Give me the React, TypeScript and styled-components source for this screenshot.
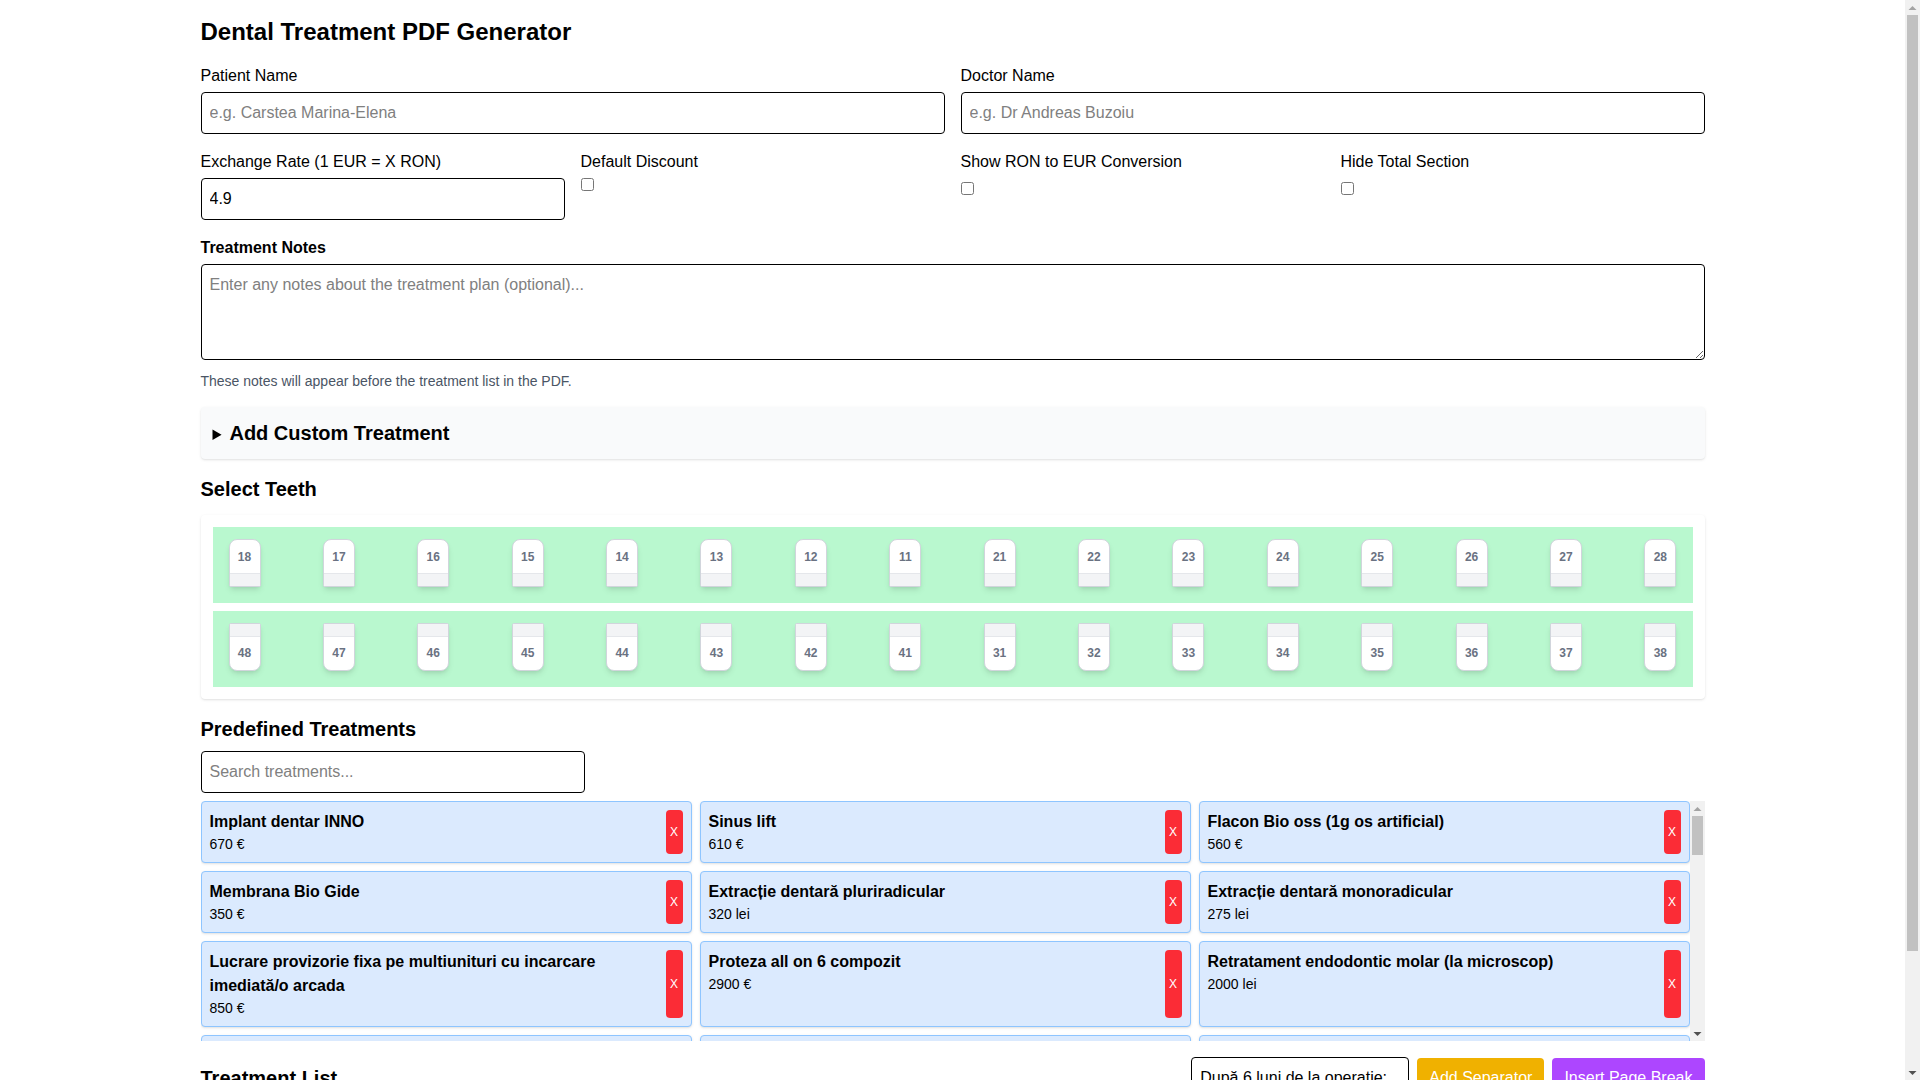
import React from "react";
import styled, { createGlobalStyle } from "styled-components";

const GlobalStyle = createGlobalStyle`
  * { box-sizing: border-box; }
  html, body { margin: 0; padding: 0; background: #fff; }
  body { padding-right: 15px; font-family: "Liberation Sans", Arial, sans-serif; font-size: 16px; line-height: 24px; color: #000; }
  input, textarea, button { font-family: inherit; font-size: 16px; line-height: 24px; }
  ::placeholder { color: #808080; opacity: 1; }
`;

const Page = styled.main`
  max-width: 1536px;
  margin: 0 auto;
  padding: 16px 16px 16px;
`;
const Title = styled.h1`
  margin: 0 0 16px;
  font-size: 24px;
  line-height: 32px;
  font-weight: 700;
`;
const Columns = styled.div<{ $cols: number }>`
  display: grid;
  grid-template-columns: repeat(${(p) => p.$cols}, minmax(0, 1fr));
  gap: 16px;
  margin-bottom: 16px;
`;
const Field = styled.div``;
const Label = styled.label<{ $strong?: boolean }>`
  display: block;
  margin-bottom: 4px;
  font-weight: ${(p) => (p.$strong ? 700 : 400)};
`;
const TextInput = styled.input`
  display: block;
  width: 100%;
  height: 42px;
  padding: 8px;
  border: 1px solid #000;
  border-radius: 4px;
  background: #fff;
  color: #000;
`;
const SearchInput = styled(TextInput)`
  width: 384px;
  margin-bottom: 8px;
`;
const Check = styled.input<{ $drop?: boolean }>`
  display: block;
  width: 13px;
  height: 13px;
  margin: ${(p) => (p.$drop ? "8px" : "0")} 0 0 0;
`;
const Notes = styled.textarea`
  display: block;
  width: 100%;
  height: 96px;
  padding: 8px;
  border: 1px solid #000;
  border-radius: 4px;
  background: #fff;
`;
const Hint = styled.p`
  margin: 11px 0 16px;
  font-size: 14px;
  line-height: 20px;
  color: #4a5565;
`;
const Disclosure = styled.details`
  margin-bottom: 16px;
  padding: 12px;
  background: #f9fafb;
  border-radius: 4px;
  box-shadow: 0 1px 3px 0 rgb(0 0 0 / 0.1), 0 1px 2px -1px rgb(0 0 0 / 0.1);
`;
const DisclosureSummary = styled.summary`
  height: 28px;
  font-size: 16px;
  line-height: 28px;
  font-weight: 700;
`;
const DisclosureTitle = styled.span`
  font-size: 20px;
  line-height: 28px;
`;
const SectionTitle = styled.h2<{ $gap: number }>`
  margin: 0 0 ${(p) => p.$gap}px;
  font-size: 20px;
  line-height: 28px;
  font-weight: 700;
`;
const TeethPanel = styled.section`
  display: flex;
  flex-direction: column;
  gap: 8px;
  margin-bottom: 16px;
  padding: 12px;
  background: #fff;
  border-radius: 4px;
  box-shadow: 0 1px 3px 0 rgb(0 0 0 / 0.1), 0 1px 2px -1px rgb(0 0 0 / 0.1);
`;
const Arch = styled.div`
  display: flex;
  justify-content: space-between;
  height: 76px;
  padding: 12px 16px 16px;
  background: #b9f8cf;
`;
const Tooth = styled.div<{ $lower?: boolean }>`
  display: flex;
  flex-direction: ${(p) => (p.$lower ? "column-reverse" : "column")};
  justify-content: space-between;
  width: 32px;
  height: 48px;
  background: #fff;
  border: 1px solid #d1d5dc;
  border-radius: ${(p) => (p.$lower ? "2px 2px 8px 8px" : "8px 8px 2px 2px")};
  box-shadow: 0 4px 6px -1px rgb(0 0 0 / 0.1), 0 2px 4px -2px rgb(0 0 0 / 0.1);
  overflow: hidden;
`;
const ToothNumber = styled.span<{ $lower?: boolean }>`
  padding: ${(p) => (p.$lower ? "0 0 9px" : "9px 0 0")};
  font-size: 12px;
  line-height: 16px;
  font-weight: 700;
  text-align: center;
  color: #6a7282;
`;
const ToothRoot = styled.span<{ $lower?: boolean }>`
  display: block;
  height: 13px;
  background: #f3f4f6;
  ${(p) => (p.$lower ? "border-bottom" : "border-top")}: 1px solid #e5e7eb;
`;
const TreatmentBox = styled.div`
  position: relative;
  height: 240px;
  margin-bottom: 16px;
  padding-right: 15px;
`;
const TreatmentGrid = styled.div`
  display: grid;
  grid-template-columns: repeat(3, minmax(0, 1fr));
  gap: 8px;
  height: 100%;
  overflow-y: auto;
`;
const Card = styled.article`
  display: flex;
  justify-content: space-between;
  gap: 8px;
  padding: 8px;
  background: #dbeafe;
  border: 1px solid #8ec5ff;
  border-radius: 4px;
  box-shadow: 0 1px 3px 0 rgb(0 0 0 / 0.1), 0 1px 2px -1px rgb(0 0 0 / 0.1);
`;
const CardBody = styled.div`
  min-width: 0;
`;
const CardTitle = styled.div`
  font-weight: 700;
`;
const CardPrice = styled.div`
  font-size: 14px;
  line-height: 20px;
`;
const RemoveButton = styled.button`
  flex: none;
  width: 17px;
  padding: 0;
  border: 0;
  border-radius: 4px;
  background: #fb2c36;
  color: #fff;
  font-size: 12px;
  line-height: 16px;
`;
const ListHeader = styled.div`
  display: flex;
  align-items: center;
  justify-content: space-between;
  margin-bottom: 16px;
`;
const ListTitle = styled.h2`
  margin: 0;
  font-size: 20px;
  line-height: 28px;
  font-weight: 700;
`;
const ListActions = styled.div`
  display: flex;
  align-items: center;
  gap: 8px;
`;
const SeparatorInput = styled(TextInput)`
  width: 218px;
`;
const ActionButton = styled.button<{ $bg: string }>`
  height: 40px;
  padding: 8px 12px;
  border: 0;
  border-radius: 4px;
  background: ${(p) => p.$bg};
  color: #fff;
`;
const EmptyList = styled.p`
  margin: 0 0 16px;
  color: #4a5565;
`;

/* Drawn scrollbars: the browser here hides its native ones. */
const Rail = styled.div<{ $page?: boolean }>`
  position: ${(p) => (p.$page ? "fixed" : "absolute")};
  top: 0;
  right: 0;
  bottom: 0;
  display: flex;
  flex-direction: column;
  width: 15px;
  background: #f1f1f1;
`;
const RailTrack = styled.div`
  flex: 1;
  padding: 0 2px;
`;
const RailThumb = styled.div<{ $height: number }>`
  height: ${(p) => p.$height}px;
  background: #c1c1c1;
`;
const RailArrow = styled.svg`
  flex: none;
  display: block;
  width: 15px;
  height: 15px;
`;

function ScrollRail({ thumb, page }: { thumb: number; page?: boolean }) {
  return (
    <Rail $page={page}>
      <RailArrow viewBox="0 0 15 15">
        <polygon points="3.5,10 7.5,6 11.5,10" fill="#a3a3a3" />
      </RailArrow>
      <RailTrack>
        <RailThumb $height={thumb} />
      </RailTrack>
      <RailArrow viewBox="0 0 15 15">
        <polygon points="3.5,6 7.5,10 11.5,6" fill="#505050" />
      </RailArrow>
    </Rail>
  );
}

const upper = [18, 17, 16, 15, 14, 13, 12, 11, 21, 22, 23, 24, 25, 26, 27, 28];
const lower = [48, 47, 46, 45, 44, 43, 42, 41, 31, 32, 33, 34, 35, 36, 37, 38];

const treatments: [string, string][] = [
  ["Implant dentar INNO", "670 €"],
  ["Sinus lift", "610 €"],
  ["Flacon Bio oss (1g os artificial)", "560 €"],
  ["Membrana Bio Gide", "350 €"],
  ["Extracție dentară pluriradicular", "320 lei"],
  ["Extracție dentară monoradicular", "275 lei"],
  ["Lucrare provizorie fixa pe multiunituri cu incarcare imediată/o arcada", "850 €"],
  ["Proteza all on 6 compozit", "2900 €"],
  ["Retratament endodontic molar (la microscop)", "2000 lei"],
  ["Coroana zirconiu", "1500 lei"],
  ["Coroana metalo-ceramica", "900 lei"],
  ["Coroana provizorie", "250 lei"],
];

export default function App() {
  return (
    <Page>
      <GlobalStyle />
      <Title>Dental Treatment PDF Generator</Title>
      <Columns $cols={2}>
        <Field>
          <Label>Patient Name</Label>
          <TextInput placeholder="e.g. Carstea Marina-Elena" />
        </Field>
        <Field>
          <Label>Doctor Name</Label>
          <TextInput placeholder="e.g. Dr Andreas Buzoiu" />
        </Field>
      </Columns>
      <Columns $cols={4}>
        <Field>
          <Label>Exchange Rate (1 EUR = X RON)</Label>
          <TextInput type="number" step="0.01" defaultValue="4.9" />
        </Field>
        <Field>
          <Label>Default Discount</Label>
          <Check type="checkbox" />
        </Field>
        <Field>
          <Label>Show RON to EUR Conversion</Label>
          <Check type="checkbox" $drop />
        </Field>
        <Field>
          <Label>Hide Total Section</Label>
          <Check type="checkbox" $drop />
        </Field>
      </Columns>
      <Label $strong>Treatment Notes</Label>
      <Notes placeholder="Enter any notes about the treatment plan (optional)..." />
      <Hint>These notes will appear before the treatment list in the PDF.</Hint>
      <Disclosure>
        <DisclosureSummary>
          <DisclosureTitle>Add Custom Treatment</DisclosureTitle>
        </DisclosureSummary>
      </Disclosure>
      <SectionTitle $gap={12}>Select Teeth</SectionTitle>
      <TeethPanel>
        <Arch>
          {upper.map((n) => (
            <Tooth key={n}>
              <ToothNumber>{n}</ToothNumber>
              <ToothRoot />
            </Tooth>
          ))}
        </Arch>
        <Arch>
          {lower.map((n) => (
            <Tooth key={n} $lower>
              <ToothNumber $lower>{n}</ToothNumber>
              <ToothRoot $lower />
            </Tooth>
          ))}
        </Arch>
      </TeethPanel>
      <SectionTitle $gap={8}>Predefined Treatments</SectionTitle>
      <SearchInput placeholder="Search treatments..." />
      <TreatmentBox>
        <TreatmentGrid>
          {treatments.map(([name, price]) => (
            <Card key={name}>
              <CardBody>
                <CardTitle>{name}</CardTitle>
                <CardPrice>{price}</CardPrice>
              </CardBody>
              <RemoveButton>X</RemoveButton>
            </Card>
          ))}
        </TreatmentGrid>
        <ScrollRail thumb={39} />
      </TreatmentBox>
      <ListHeader>
        <ListTitle>Treatment List</ListTitle>
        <ListActions>
          <SeparatorInput defaultValue="După 6 luni de la operație:" />
          <ActionButton $bg="#f0b100">Add Separator</ActionButton>
          <ActionButton $bg="#ad46ff">Insert Page Break</ActionButton>
        </ListActions>
      </ListHeader>
      <EmptyList>No treatments added yet.</EmptyList>
      <ActionButton $bg="#00c950">Generate PDF</ActionButton>
      <ScrollRail thumb={936} page />
    </Page>
  );
}
